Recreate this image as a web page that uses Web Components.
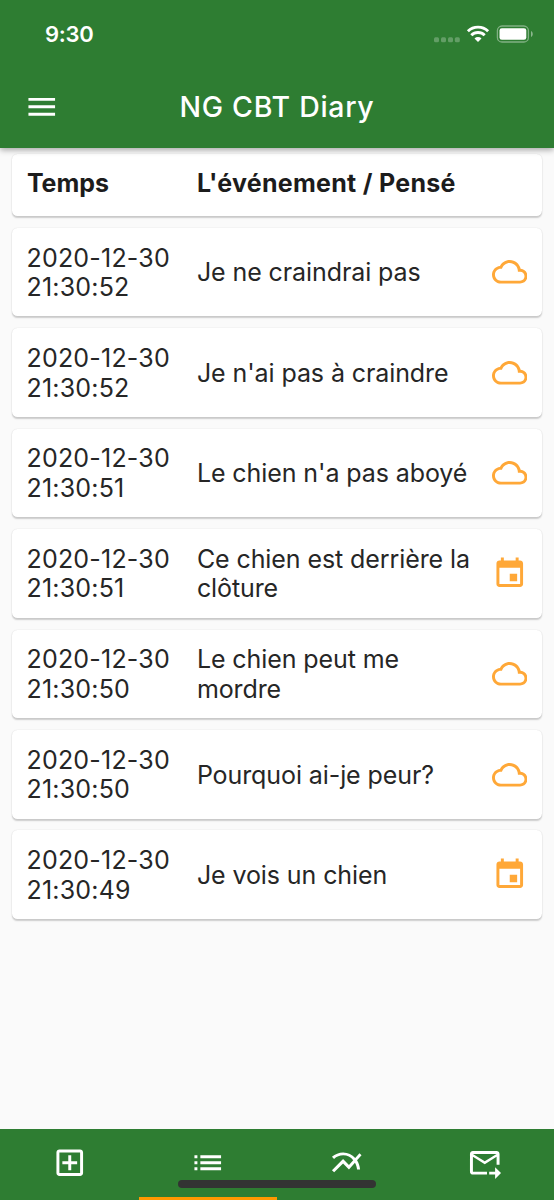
<!DOCTYPE html>
<html lang="fr">
<head>
<meta charset="utf-8">
<title>NG CBT Diary</title>
<style>
html,body{margin:0;height:100%;background:#fafafa}
body{font-family:Inter,"Liberation Sans",sans-serif;color:#262626;overflow:hidden}
</style>
</head>
<body>
<diary-app>
  <status-bar slot="top">9:30</status-bar>
  <app-bar slot="top">NG CBT Diary</app-bar>
  <diary-head><span slot="time">Temps</span>L'événement / Pensé</diary-head>
  <diary-row date="2020-12-30" time="21:30:52" icon="cloud">Je ne craindrai pas</diary-row>
  <diary-row date="2020-12-30" time="21:30:52" icon="cloud">Je n'ai pas à craindre</diary-row>
  <diary-row date="2020-12-30" time="21:30:51" icon="cloud">Le chien n'a pas aboyé</diary-row>
  <diary-row date="2020-12-30" time="21:30:51" icon="event">Ce chien est derrière la clôture</diary-row>
  <diary-row date="2020-12-30" time="21:30:50" icon="cloud">Le chien peut me mordre</diary-row>
  <diary-row date="2020-12-30" time="21:30:50" icon="cloud">Pourquoi ai-je peur?</diary-row>
  <diary-row date="2020-12-30" time="21:30:49" icon="event">Je vois un chien</diary-row>
  <tab-bar slot="bottom"></tab-bar>
</diary-app>
<script>
const ICONS = {
  menu: 'M3 18h18v-2H3v2zm0-5h18v-2H3v2zm0-7v2h18V6H3z',
  cloud: 'M19.35 10.04C18.67 6.59 15.64 4 12 4 9.11 4 6.6 5.64 5.35 8.04 2.34 8.36 0 10.91 0 14c0 3.31 2.69 6 6 6h13c2.76 0 5-2.24 5-5 0-2.64-2.05-4.78-4.65-4.96zM19 18H6c-2.21 0-4-1.79-4-4s1.79-4 4-4h.71C7.37 7.69 9.48 6 12 6c3.04 0 5.5 2.46 5.5 5.5v.5H19c1.66 0 3 1.34 3 3s-1.34 3-3 3z',
  event: 'M17 12h-5v5h5v-5zM16 1v2H8V1H6v2H5c-1.11 0-1.99.9-1.99 2L3 19c0 1.1.89 2 2 2h14c1.1 0 2-.9 2-2V5c0-1.1-.9-2-2-2h-1V1h-2zm3 18H5V8h14v11z',
  add: 'M19 3H5c-1.11 0-2 .9-2 2v14c0 1.1.89 2 2 2h14c1.1 0 2-.9 2-2V5c0-1.1-.9-2-2-2zm0 16H5V5h14v14zm-8-2h2v-4h4v-2h-4V7h-2v4H7v2h4z',
  list: 'M3 13h2v-2H3v2zm0 4h2v-2H3v2zm0-8h2V7H3v2zm4 4h14v-2H7v2zm0 4h14v-2H7v2zM7 7v2h14V7H7z',
  chart: 'M22 6.92l-1.41-1.41-2.85 3.21C15.68 6.4 12.83 5 9.61 5 6.72 5 4.07 6.16 2 8l1.42 1.42C5.12 7.93 7.27 7 9.61 7c2.74 0 5.09 1.26 6.77 3.24l-2.88 3.24-4-4L2 16.99l1.5 1.5 6-6.01 4 4 4.05-4.55c.75 1.35 1.25 2.9 1.44 4.55H21c-.22-2.3-.95-4.39-2.04-6.14L22 6.92z',
  mail: 'M20 4H4c-1.1 0-1.99.9-1.99 2L2 18c0 1.1.9 2 2 2h9.500v-2H4V8l8 5 8-5v5.400h2V6c0-1.1-.9-2-2-2zm-8 7L4 6h16l-8 5zm7 4l4 4-4 4v-3h-4v-2h4v-3z'
};
function define(name, render) {
  customElements.define(name, class extends HTMLElement {
    constructor() {
      super();
      this.attachShadow({ mode: 'open' }).innerHTML = render(this);
    }
  });
}
define('md-icon', el => `<style>:host{display:block;flex:none;width:35.5px;height:35.5px}svg{display:block;width:100%;height:100%;fill:currentColor}</style>
<svg viewBox="0 0 24 24"><path d="${ICONS[el.getAttribute('name')]}"/></svg>`);

define('diary-app', () => `<style>
:host{display:flex;flex-direction:column;height:100vh}
header{flex:none;height:148px;background:#2e7d32;color:#fff;box-shadow:0 2px 6px rgba(0,0,0,.34);position:relative;z-index:1}
main{flex:1;min-height:0;padding:6px 11.7px 0;display:flex;flex-direction:column;gap:11.82px}
</style><header><slot name="top"></slot></header><main><slot></slot></main><slot name="bottom"></slot>`);

define('status-bar', () => `<style>
:host{display:flex;align-items:center;box-sizing:border-box;height:65px;padding:3px 21px 0 45px;font-size:22px;font-weight:600;line-height:30px;letter-spacing:-.3px}
.t{flex:1}
svg{display:block;flex:none}
</style><span class="t"><slot></slot></span>
<svg width="100" height="24" viewBox="0 0 100 24" fill="#fff">
<g opacity=".25"><rect x="1" y="15.200" width="5" height="5" rx="1.5"/><rect x="8" y="15.200" width="5" height="5" rx="1.5"/><rect x="15" y="15.200" width="5" height="5" rx="1.5"/><rect x="21.800" y="15.200" width="5" height="5" rx="1.500"/></g>
<path d="M45 20l-3.500-3.500a5 5 0 0 1 7 0z"/>
<g fill="none" stroke="#fff" stroke-width="2.900"><path d="M38.300 13.200a9.600 9.600 0 0 1 13.400 0"/><path d="M34.900 9.200a14.600 14.600 0 0 1 20.200 0"/></g>
<rect x="64.400" y="4" width="31" height="16" rx="4.600" fill="none" stroke="#fff" stroke-width="1.300" opacity=".4"/>
<rect x="66.500" y="6.200" width="26.800" height="11.600" rx="2.300"/>
<path d="M98 9c2.300.8 2.300 5.200 0 6z" opacity=".45"/>
</svg>`);

define('app-bar', () => `<style>
:host{display:grid;grid-template-columns:1fr auto 1fr;align-items:center;height:83px;padding:0 23.500px;font-size:28.500px;font-weight:500;line-height:40px;letter-spacing:.7px}
</style><md-icon name="menu"></md-icon><span><slot></slot></span>`);

const CARD = `:host{display:grid;grid-template-columns:170px 283px 1fr;align-items:center;flex:none;box-sizing:border-box;padding:0 15px 0 15.200px;background:#fff;border-radius:5.500px;box-shadow:0 1.500px 1.500px rgba(0,0,0,.18),0 0 1.500px rgba(0,0,0,.1);font-size:25px;line-height:29.540px}`;
define('diary-head', () => `<style>${CARD}:host{height:62px;font-weight:700;padding-bottom:2px;color:#1c1c1c}.e{letter-spacing:.280px}
</style><slot name="time"></slot><span class="e"><slot></slot></span>`);
define('diary-row', el => `<style>${CARD}:host{height:88.640px;font-weight:400}
.t,.e{padding-top:2px}.t{letter-spacing:.2px;margin-left:-.4px}.e{letter-spacing:-.090px}md-icon{justify-self:end;color:#ffa838}
</style><span class="t">${el.getAttribute('date')}<br>${el.getAttribute('time')}</span><span class="e"><slot></slot></span><md-icon name="${el.getAttribute('icon')}"></md-icon>`);

define('tab-bar', () => `<style>
:host{display:grid;grid-template-columns:repeat(4,1fr);flex:none;height:71px;background:#2e7d32;color:#fff;position:relative}
div{display:flex;justify-content:center;align-items:flex-start;padding-top:16.300px;box-sizing:border-box;height:71px}
.on{border-bottom:3.500px solid #ff9800}
i{position:absolute;left:178.400px;top:51.200px;width:197.600px;height:7.400px;border-radius:4px;background:#333}
</style><div><md-icon name="add"></md-icon></div><div class="on"><md-icon name="list"></md-icon></div><div><md-icon name="chart"></md-icon></div><div><md-icon name="mail"></md-icon></div><i></i>`);
</script>
</body>
</html>
